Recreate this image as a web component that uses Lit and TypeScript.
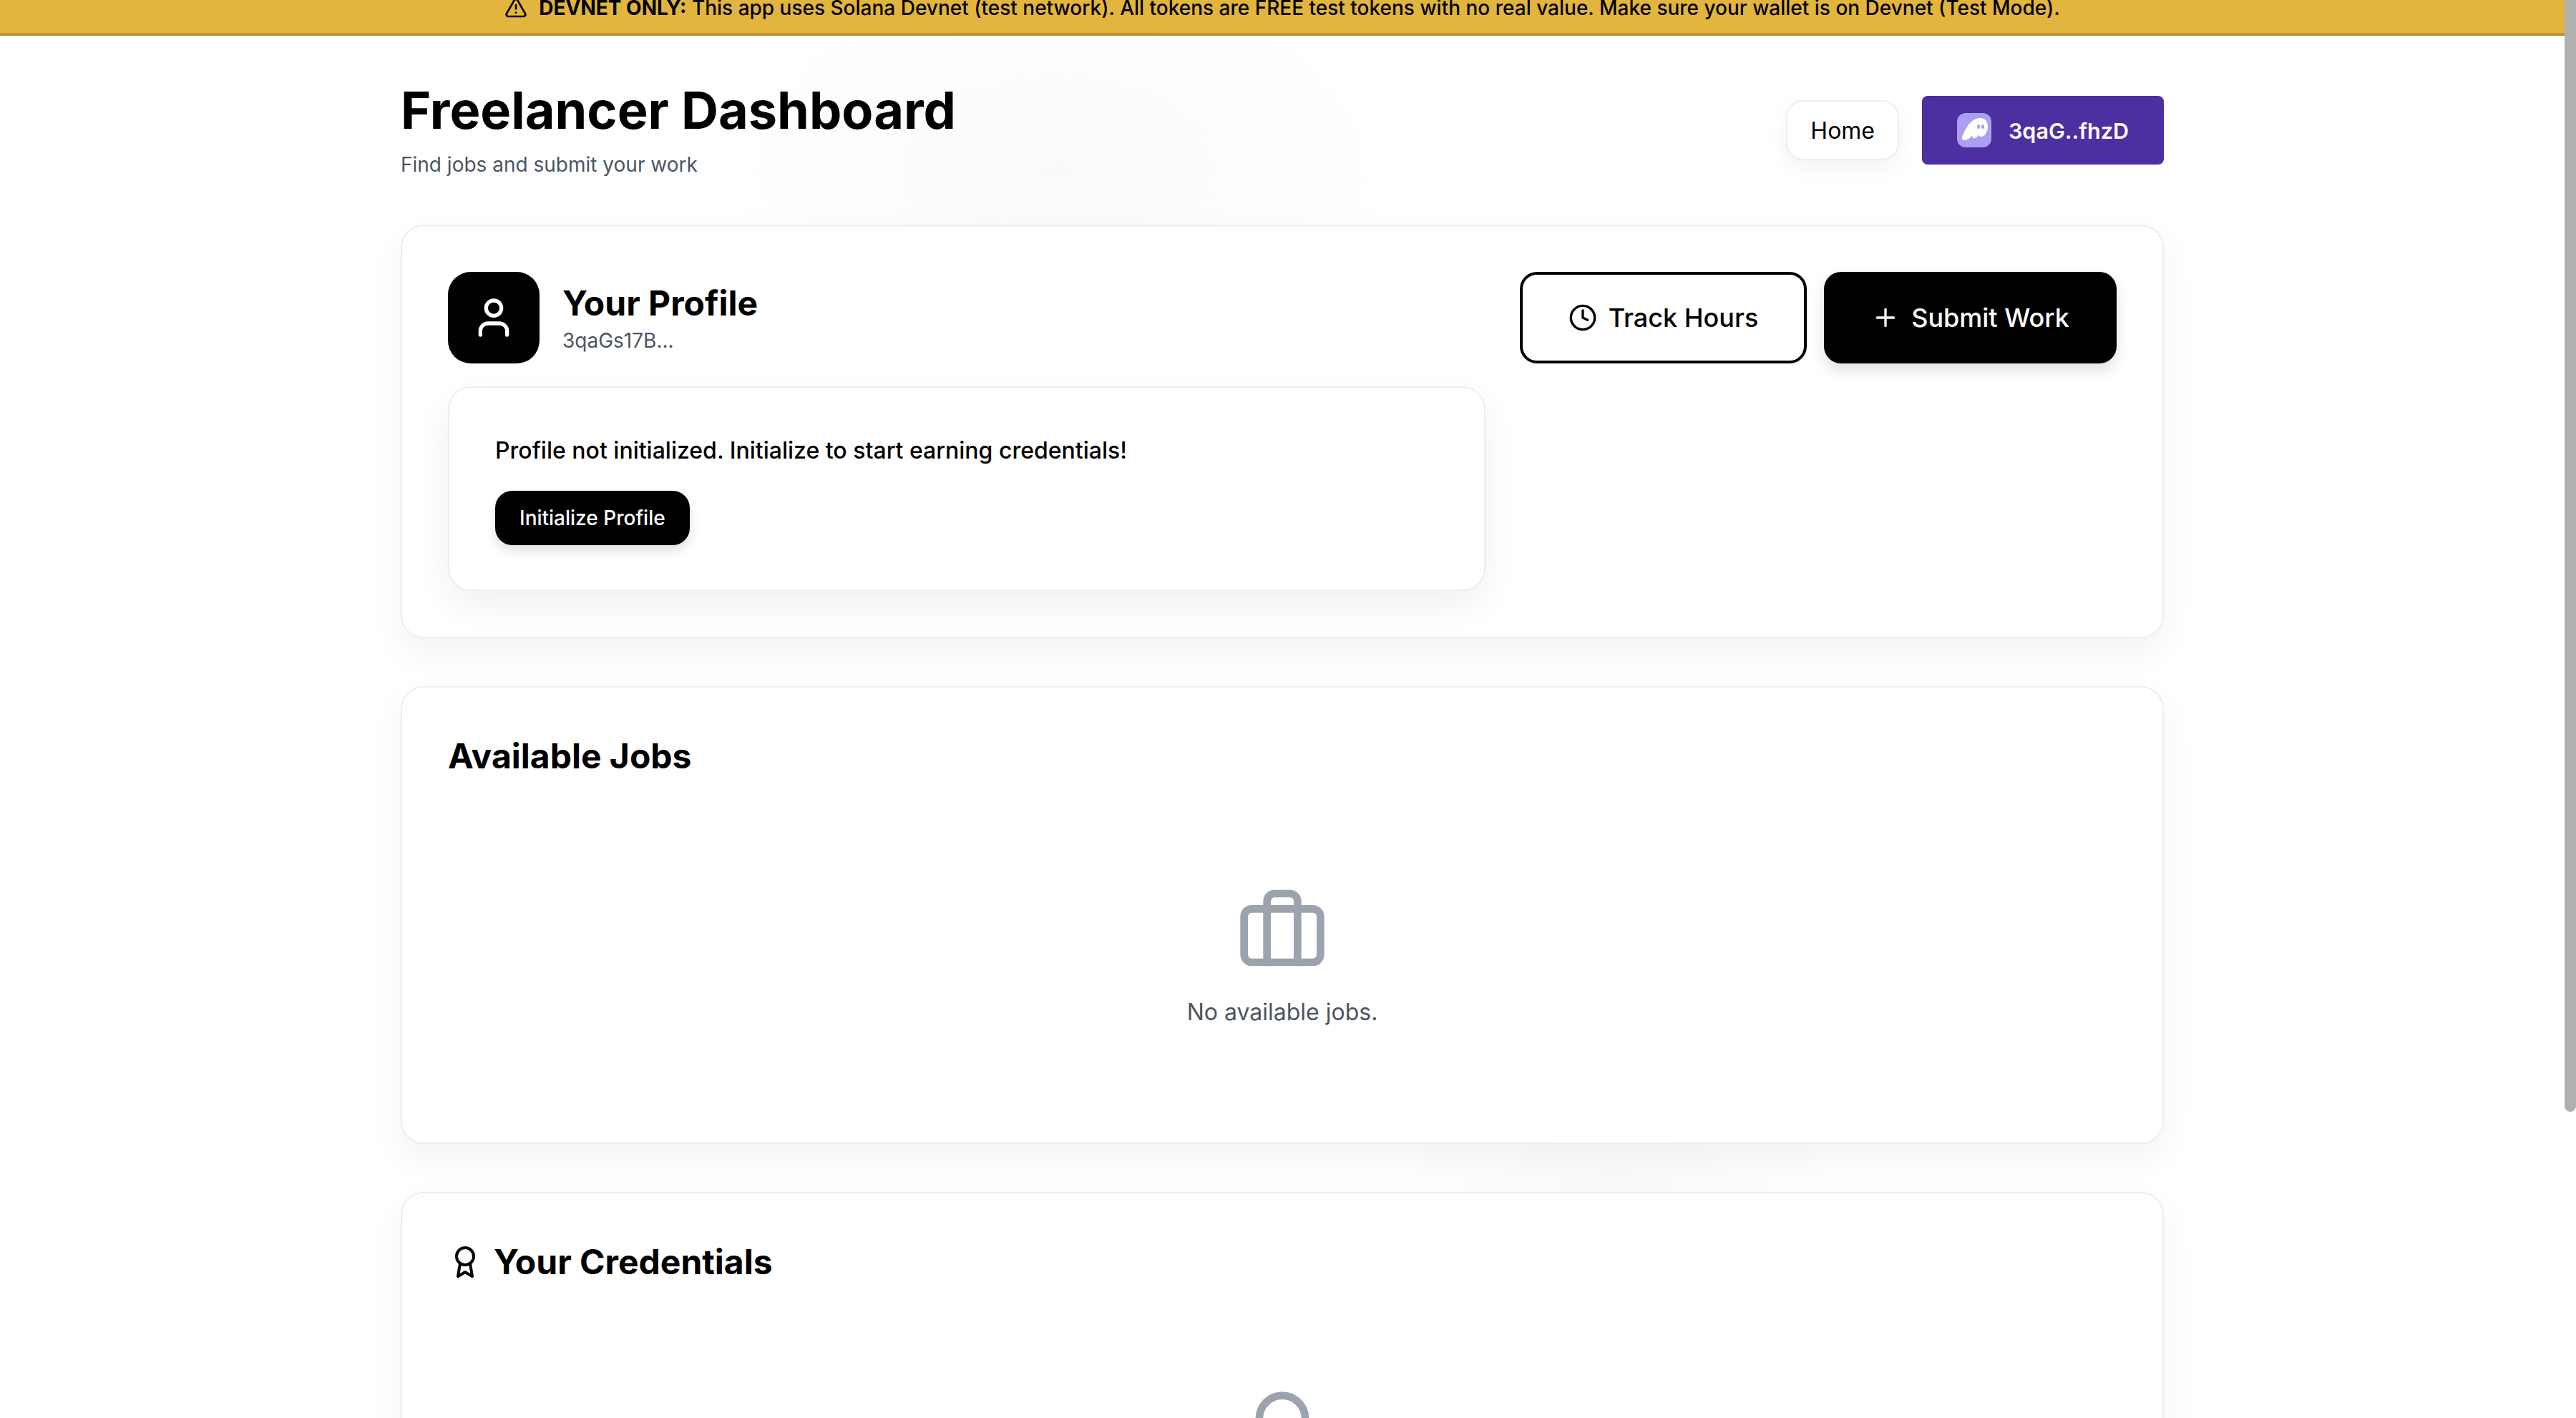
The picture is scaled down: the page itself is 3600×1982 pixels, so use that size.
import { LitElement, html, css, svg } from "lit";
import { customElement } from "lit/decorators.js";

const icon = (size: number, body: unknown) => html`<svg width=${size} height=${size} viewBox="0 0 24 24" fill="none" stroke="currentColor" stroke-width="2" stroke-linecap="round" stroke-linejoin="round">${body}</svg>`;

const awardPaths = svg`<circle cx="12" cy="8" r="6"></circle><path d="M15.477 12.89 17 22l-5-3-5 3 1.523-9.11"></path>`;
const briefcasePaths = svg`<rect x="2" y="7" width="20" height="14" rx="2" ry="2"></rect><path d="M16 21V5a2 2 0 0 0-2-2h-4a2 2 0 0 0-2 2v16"></path>`;
const userPaths = svg`<circle cx="12" cy="7" r="4"></circle><path d="M19 21v-2a4 4 0 0 0-4-4H9a4 4 0 0 0-4 4v2"></path>`;
const clockPaths = svg`<circle cx="12" cy="12" r="10"></circle><polyline points="12 6 12 12 16 14"></polyline>`;
const plusPaths = svg`<path d="M5 12h14"></path><path d="M12 5v14"></path>`;
const alertPaths = svg`<path d="m21.73 18-8-14a2 2 0 0 0-3.48 0l-8 14A2 2 0 0 0 4 21h16a2 2 0 0 0 1.73-3Z"></path><path d="M12 9v4"></path><path d="M12 17h.01"></path>`;

@customElement("app-root")
export class AppRoot extends LitElement {
  static styles = css`
    :host {
      display: flex;
      height: 1982px;
      overflow: hidden;
      font-family: Inter, "Liberation Sans", sans-serif;
      color: #000;
      background: #fff;
    }
    .page {
      flex: 1;
      min-width: 0;
      background:
        radial-gradient(ellipse 480px 300px at 1480px 240px, #fafafa, rgba(250, 250, 250, 0)),
        radial-gradient(ellipse 300px 100px at 2260px 1640px, #fafafa, rgba(250, 250, 250, 0)),
        #fff;
    }
    .scrollbar { width: 16px; background: #fff; }
    .thumb { height: 1554px; background: #b0b0b0; border-radius: 0 0 8px 8px; }
    .banner {
      height: 22px;
      padding-bottom: 24px;
      border-bottom: 4px solid #c08f33;
      background: #e1b53e;
      display: flex;
      justify-content: center;
      align-items: center;
      gap: 16px;
      font-size: 28px;
      line-height: 40px;
      font-weight: 500;
    }
    .banner b { font-weight: 700; }
    .banner svg { flex: none; }
    .container { width: 2464px; margin: 0 auto; padding-top: 64px; }
    header { display: flex; justify-content: space-between; align-items: center; margin-bottom: 64px; }
    h1 { margin: 0; font-size: 72px; line-height: 80px; font-weight: 700; }
    .sub { margin: 16px 0 0; font-size: 28px; line-height: 40px; color: #4b5563; }
    .nav { display: flex; align-items: center; gap: 32px; }
    .home {
      height: 84px; box-sizing: border-box; padding: 0 32px;
      display: flex; align-items: center;
      border: 2px solid #eee; border-radius: 24px; background: #fff;
      font-size: 32px;
      box-shadow: 0 10px 30px rgba(0,0,0,.05);
    }
    .wallet {
      width: 338px; height: 96px; box-sizing: border-box;
      display: flex; align-items: center; justify-content: center; gap: 24px;
      background: #4c2fa0; color: #fff; border-radius: 8px;
      font-size: 30.5px; font-weight: 600;
    }
    .phantom { width: 48px; height: 48px; display: block; }
    .card {
      border: 2px solid #eee; border-radius: 32px; background: #fff;
      padding: 64px; margin-bottom: 67px;
      box-shadow: 0 20px 50px rgba(0,0,0,.05);
    }
    .profile { display: flex; gap: 48px; align-items: flex-start; }
    .profile-left { flex: 1; min-width: 0; }
    .who { display: flex; align-items: center; gap: 32px; margin-bottom: 32px; }
    .avatar {
      width: 128px; height: 128px; border-radius: 32px; background: #000; color: #fff;
      display: flex; align-items: center; justify-content: center;
    }
    h3 { margin: 0; font-size: 48px; line-height: 64px; font-weight: 700; }
    .addr { font-size: 28px; line-height: 40px; color: #4b5563; }
    .inner {
      border: 2px solid #eee; border-radius: 32px; background: #fff;
      padding: 64px 64px 62px; box-shadow: 0 20px 50px rgba(0,0,0,.06);
    }
    .inner p { margin: 0 0 32px; font-size: 32px; line-height: 48px; font-weight: 500; }
    .init {
      display: inline-flex; align-items: center; height: 76px; padding: 0 34px;
      background: #000; color: #fff; border-radius: 24px; font-size: 28px; font-weight: 500;
      box-shadow: 0 8px 16px rgba(0,0,0,.12);
    }
    .actions { display: flex; gap: 24px; }
    .btn {
      height: 128px; box-sizing: border-box; display: flex; align-items: center; justify-content: center; gap: 16px;
      border-radius: 24px; font-size: 36px; font-weight: 500;
    }
    .btn.outline { width: 401px; border: 4px solid #000; background: #fff; }
    .btn.solid { width: 409px; background: #000; color: #fff; box-shadow: 0 10px 20px rgba(0,0,0,.12); }
    h2 { margin: 0 0 48px; font-size: 48px; line-height: 64px; font-weight: 700; display: flex; align-items: center; gap: 16px; }
    .empty { padding: 96px 0 94px; display: flex; flex-direction: column; align-items: center; color: #9ca3af; }
    .empty p { margin: 30px 0 0; font-size: 32px; line-height: 48px; color: #4b5563; }
  `;

  render() {
    return html`
      <div class="page">
        <div class="banner">
          ${icon(32, alertPaths)}
          <span><b>DEVNET ONLY:</b> This app uses Solana Devnet (test network). All tokens are FREE test tokens with no real value. Make sure your wallet is on Devnet (Test Mode).</span>
        </div>
        <div class="container">
          <header>
            <div>
              <h1>Freelancer Dashboard</h1>
              <p class="sub">Find jobs and submit your work</p>
            </div>
            <div class="nav">
              <div class="home">Home</div>
              <div class="wallet">
                <svg class="phantom" viewBox="0 0 48 48">
                  <rect width="48" height="48" rx="12" fill="#ab9ff2"></rect>
                  <path fill="#fffdf8" d="M10 38C7 38 6 35 8 31C12 22 19 8 31 7C39 6 43 12 43 19C43 27 38 34 33 33C31 33 30 31 30 30C29 33 26 36 23 35C21 34.5 21 32 21 31C19 35 14 38 10 38Z"></path>
                  <ellipse cx="30" cy="19" rx="2" ry="3" fill="#ab9ff2"></ellipse>
                  <ellipse cx="36" cy="19" rx="2" ry="3" fill="#ab9ff2"></ellipse>
                </svg>
                <span>3qaG..fhzD</span>
              </div>
            </div>
          </header>

          <section class="card">
            <div class="profile">
              <div class="profile-left">
                <div class="who">
                  <div class="avatar">${icon(64, userPaths)}</div>
                  <div>
                    <h3>Your Profile</h3>
                    <div class="addr">3qaGs17B...</div>
                  </div>
                </div>
                <div class="inner">
                  <p>Profile not initialized. Initialize to start earning credentials!</p>
                  <div class="init">Initialize Profile</div>
                </div>
              </div>
              <div class="actions">
                <div class="btn outline">${icon(40, clockPaths)}<span>Track Hours</span></div>
                <div class="btn solid">${icon(40, plusPaths)}<span>Submit Work</span></div>
              </div>
            </div>
          </section>

          <section class="card">
            <h2>Available Jobs</h2>
            <div class="empty">
              ${icon(128, briefcasePaths)}
              <p>No available jobs.</p>
            </div>
          </section>

          <section class="card">
            <h2>${icon(48, awardPaths)}<span>Your Credentials</span></h2>
            <div class="empty">
              ${icon(128, awardPaths)}
            </div>
          </section>
        </div>
      </div>
      <div class="scrollbar"><div class="thumb"></div></div>
    `;
  }
}
